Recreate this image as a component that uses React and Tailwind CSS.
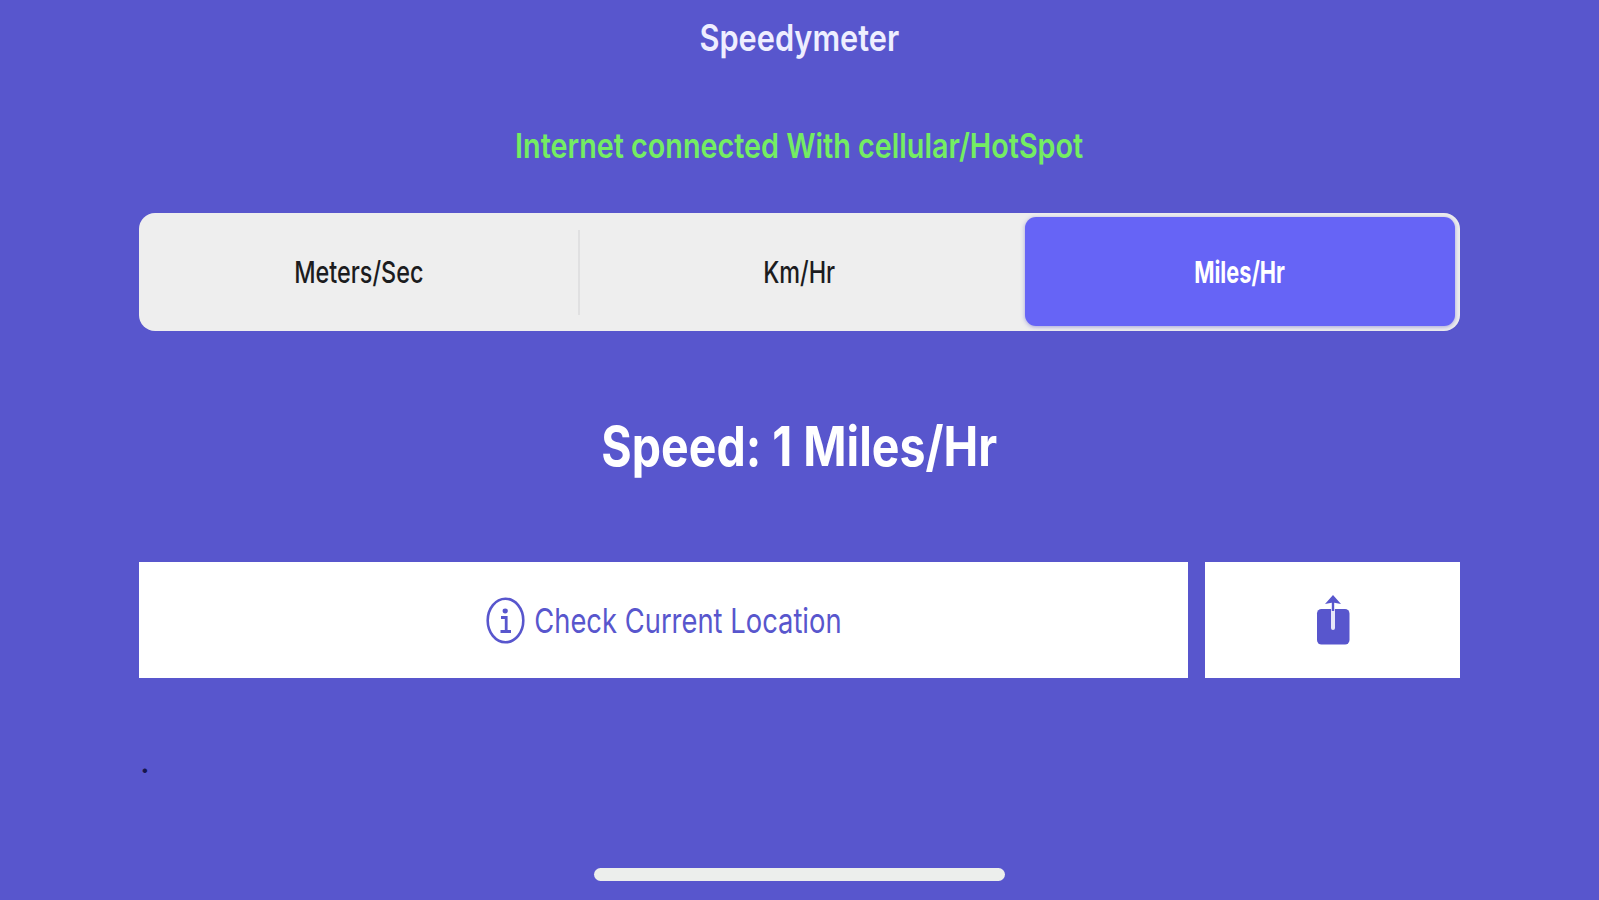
import React, { useState } from 'react';

const units = [
    { id: 'mps', label: 'Meters/Sec', stretch: 'scale-x-[0.78]' },
    { id: 'kmh', label: 'Km/Hr', stretch: 'scale-x-[0.78]' },
    { id: 'mph', label: 'Miles/Hr', stretch: 'scale-x-[0.725]' },
];

const InfoIcon = () => (
    <svg className="h-[47px] w-[39px] shrink-0" viewBox="0 0 39 47" fill="none" stroke="currentColor">
        <ellipse cx="19.5" cy="23.5" rx="17.8" ry="21.8" strokeWidth="2.6" />
        <ellipse cx="19.2" cy="14" rx="2.6" ry="2.4" fill="currentColor" stroke="none" />
        <path d="M15 20.5h5.2v13.5M14.5 34.5h10.5" strokeWidth="2.8" />
    </svg>
);

const ShareIcon = () => (
    <svg className="h-[51px] w-[34px]" viewBox="0 0 34 51">
        <rect x="1" y="14" width="32.5" height="35.5" rx="4.5" fill="currentColor" />
        <path d="M17 14v19" stroke="#fff" strokeWidth="4" strokeOpacity="0.85" strokeLinecap="round" />
        <path d="M17 5v11" stroke="currentColor" strokeWidth="2.4" />
        <path d="M17 0 9 9 17 7.5 25 9z" fill="currentColor" />
    </svg>
);

const App = () => {
    const [selected, setSelected] = useState('mph');

    return (
        <div className="flex h-[900px] w-[1599px] flex-col items-center overflow-hidden bg-[#5856cd] font-['Inter',sans-serif] whitespace-nowrap">
            {/* Title */}
            <h1 className="flex h-[75px] items-center text-[37px] font-semibold text-[#eeeeff]">
                <span className="scale-x-[0.83]">Speedymeter</span>
            </h1>

            {/* Connection status */}
            <p className="mt-[45px] flex h-[50px] items-center text-[34px] font-semibold text-[#74ed62]">
                <span className="scale-x-[0.845]">Internet connected With cellular/HotSpot</span>
            </p>

            {/* Unit selector */}
            <div className="mt-[43px] flex h-[118px] w-[1321px] items-center rounded-[16px] bg-[#eeeeee]">
                {units.map((unit, i) => (
                    <React.Fragment key={unit.id}>
                        {i === 1 && <div className="-mx-px h-[85px] w-[2px] bg-[#e0e0e1]" />}
                        <button
                            onClick={() => setSelected(unit.id)}
                            className="h-full flex-1 pt-[4px] pr-[5px] pb-[5px] pl-[5px] text-[30px]"
                        >
                            <span
                                className={`flex h-full items-center justify-center rounded-[11px] pt-[2px] ${
                                    selected === unit.id
                                        ? 'bg-[#6664f6] font-bold text-white shadow-[0_1px_4px_#5856cd80]'
                                        : 'font-medium text-[#1c1c1e]'
                                }`}
                            >
                                <span className={unit.stretch}>{unit.label}</span>
                            </span>
                        </button>
                    </React.Fragment>
                ))}
            </div>

            {/* Current speed */}
            <h2 className="mt-[75px] flex h-[80px] items-center text-[55px] font-bold text-white">
                <span className="scale-x-[0.845]">Speed: 1 Miles/Hr</span>
            </h2>

            {/* Actions */}
            <div className="mt-[76px] flex h-[116px] w-[1321px] gap-[17px] text-[#5856cd]">
                <button className="flex w-[1049px] items-center justify-center bg-white">
                    <InfoIcon />
                    <span className="ml-[9px] flex w-[307px] justify-center text-[34px]">
                        <span className="scale-x-[0.805]">Check Current Location</span>
                    </span>
                </button>
                <button className="flex flex-1 items-center justify-center bg-white">
                    <ShareIcon />
                </button>
            </div>

            {/* Location output */}
            <p className="mt-[63px] w-[1321px] pl-px text-[34px] leading-[40px] text-[#17164d]">.</p>

            {/* Home indicator */}
            <div className="mt-[87px] h-[13px] w-[411px] rounded-full bg-[#eceeec]" />
        </div>
    );
};

export default App;
